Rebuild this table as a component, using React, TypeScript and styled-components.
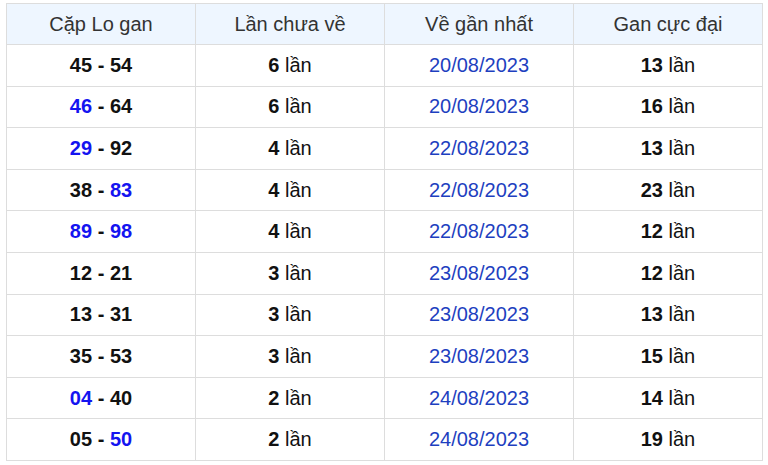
import React from 'react';
import styled, { createGlobalStyle } from 'styled-components';

const GlobalStyle = createGlobalStyle`
  html, body {
    margin: 0;
    padding: 0;
    background: #ffffff;
    font-family: "Liberation Sans", Arial, sans-serif;
  }
`;

const Wrapper = styled.div`
  padding: 3px 0 0 6px;
`;

const Table = styled.table`
  width: 757px;
  border-collapse: collapse;
  table-layout: fixed;
  font-size: 20px;
  color: #111;
`;

const HeadCell = styled.th`
  height: 40px;
  padding: 0;
  background: #eef6ff;
  border: 1px solid #dddddd;
  font-weight: normal;
  color: #333;
  text-align: center;
`;

const Cell = styled.td`
  height: 40.6px;
  padding: 0;
  border: 1px solid #dddddd;
  text-align: center;
`;

const Num = styled.b<{ $blue?: boolean }>`
  color: ${({ $blue }) => ($blue ? '#1414f0' : '#111')};
`;

const DateText = styled.span`
  color: #1e3fbf;
`;

type Row = { a: string; b: string; blueA?: boolean; blueB?: boolean; cur: number; last: string; max: number };

const rows: Row[] = [
  { a: '45', b: '54', cur: 6, last: '20/08/2023', max: 13 },
  { a: '46', b: '64', blueA: true, cur: 6, last: '20/08/2023', max: 16 },
  { a: '29', b: '92', blueA: true, cur: 4, last: '22/08/2023', max: 13 },
  { a: '38', b: '83', blueB: true, cur: 4, last: '22/08/2023', max: 23 },
  { a: '89', b: '98', blueA: true, blueB: true, cur: 4, last: '22/08/2023', max: 12 },
  { a: '12', b: '21', cur: 3, last: '23/08/2023', max: 12 },
  { a: '13', b: '31', cur: 3, last: '23/08/2023', max: 13 },
  { a: '35', b: '53', cur: 3, last: '23/08/2023', max: 15 },
  { a: '04', b: '40', blueA: true, cur: 2, last: '24/08/2023', max: 14 },
  { a: '05', b: '50', blueB: true, cur: 2, last: '24/08/2023', max: 19 },
];

export default function App() {
  return (
    <>
      <GlobalStyle />
      <Wrapper>
        <Table>
          <thead>
            <tr>
              <HeadCell>Cặp Lo gan</HeadCell>
              <HeadCell>Lần chưa về</HeadCell>
              <HeadCell>Về gần nhất</HeadCell>
              <HeadCell>Gan cực đại</HeadCell>
            </tr>
          </thead>
          <tbody>
            {rows.map((r) => (
              <tr key={r.a + r.b}>
                <Cell>
                  <Num $blue={r.blueA}>{r.a}</Num> <Num>-</Num> <Num $blue={r.blueB}>{r.b}</Num>
                </Cell>
                <Cell>
                  <Num>{r.cur}</Num> lần
                </Cell>
                <Cell>
                  <DateText>{r.last}</DateText>
                </Cell>
                <Cell>
                  <Num>{r.max}</Num> lần
                </Cell>
              </tr>
            ))}
          </tbody>
        </Table>
      </Wrapper>
    </>
  );
}
